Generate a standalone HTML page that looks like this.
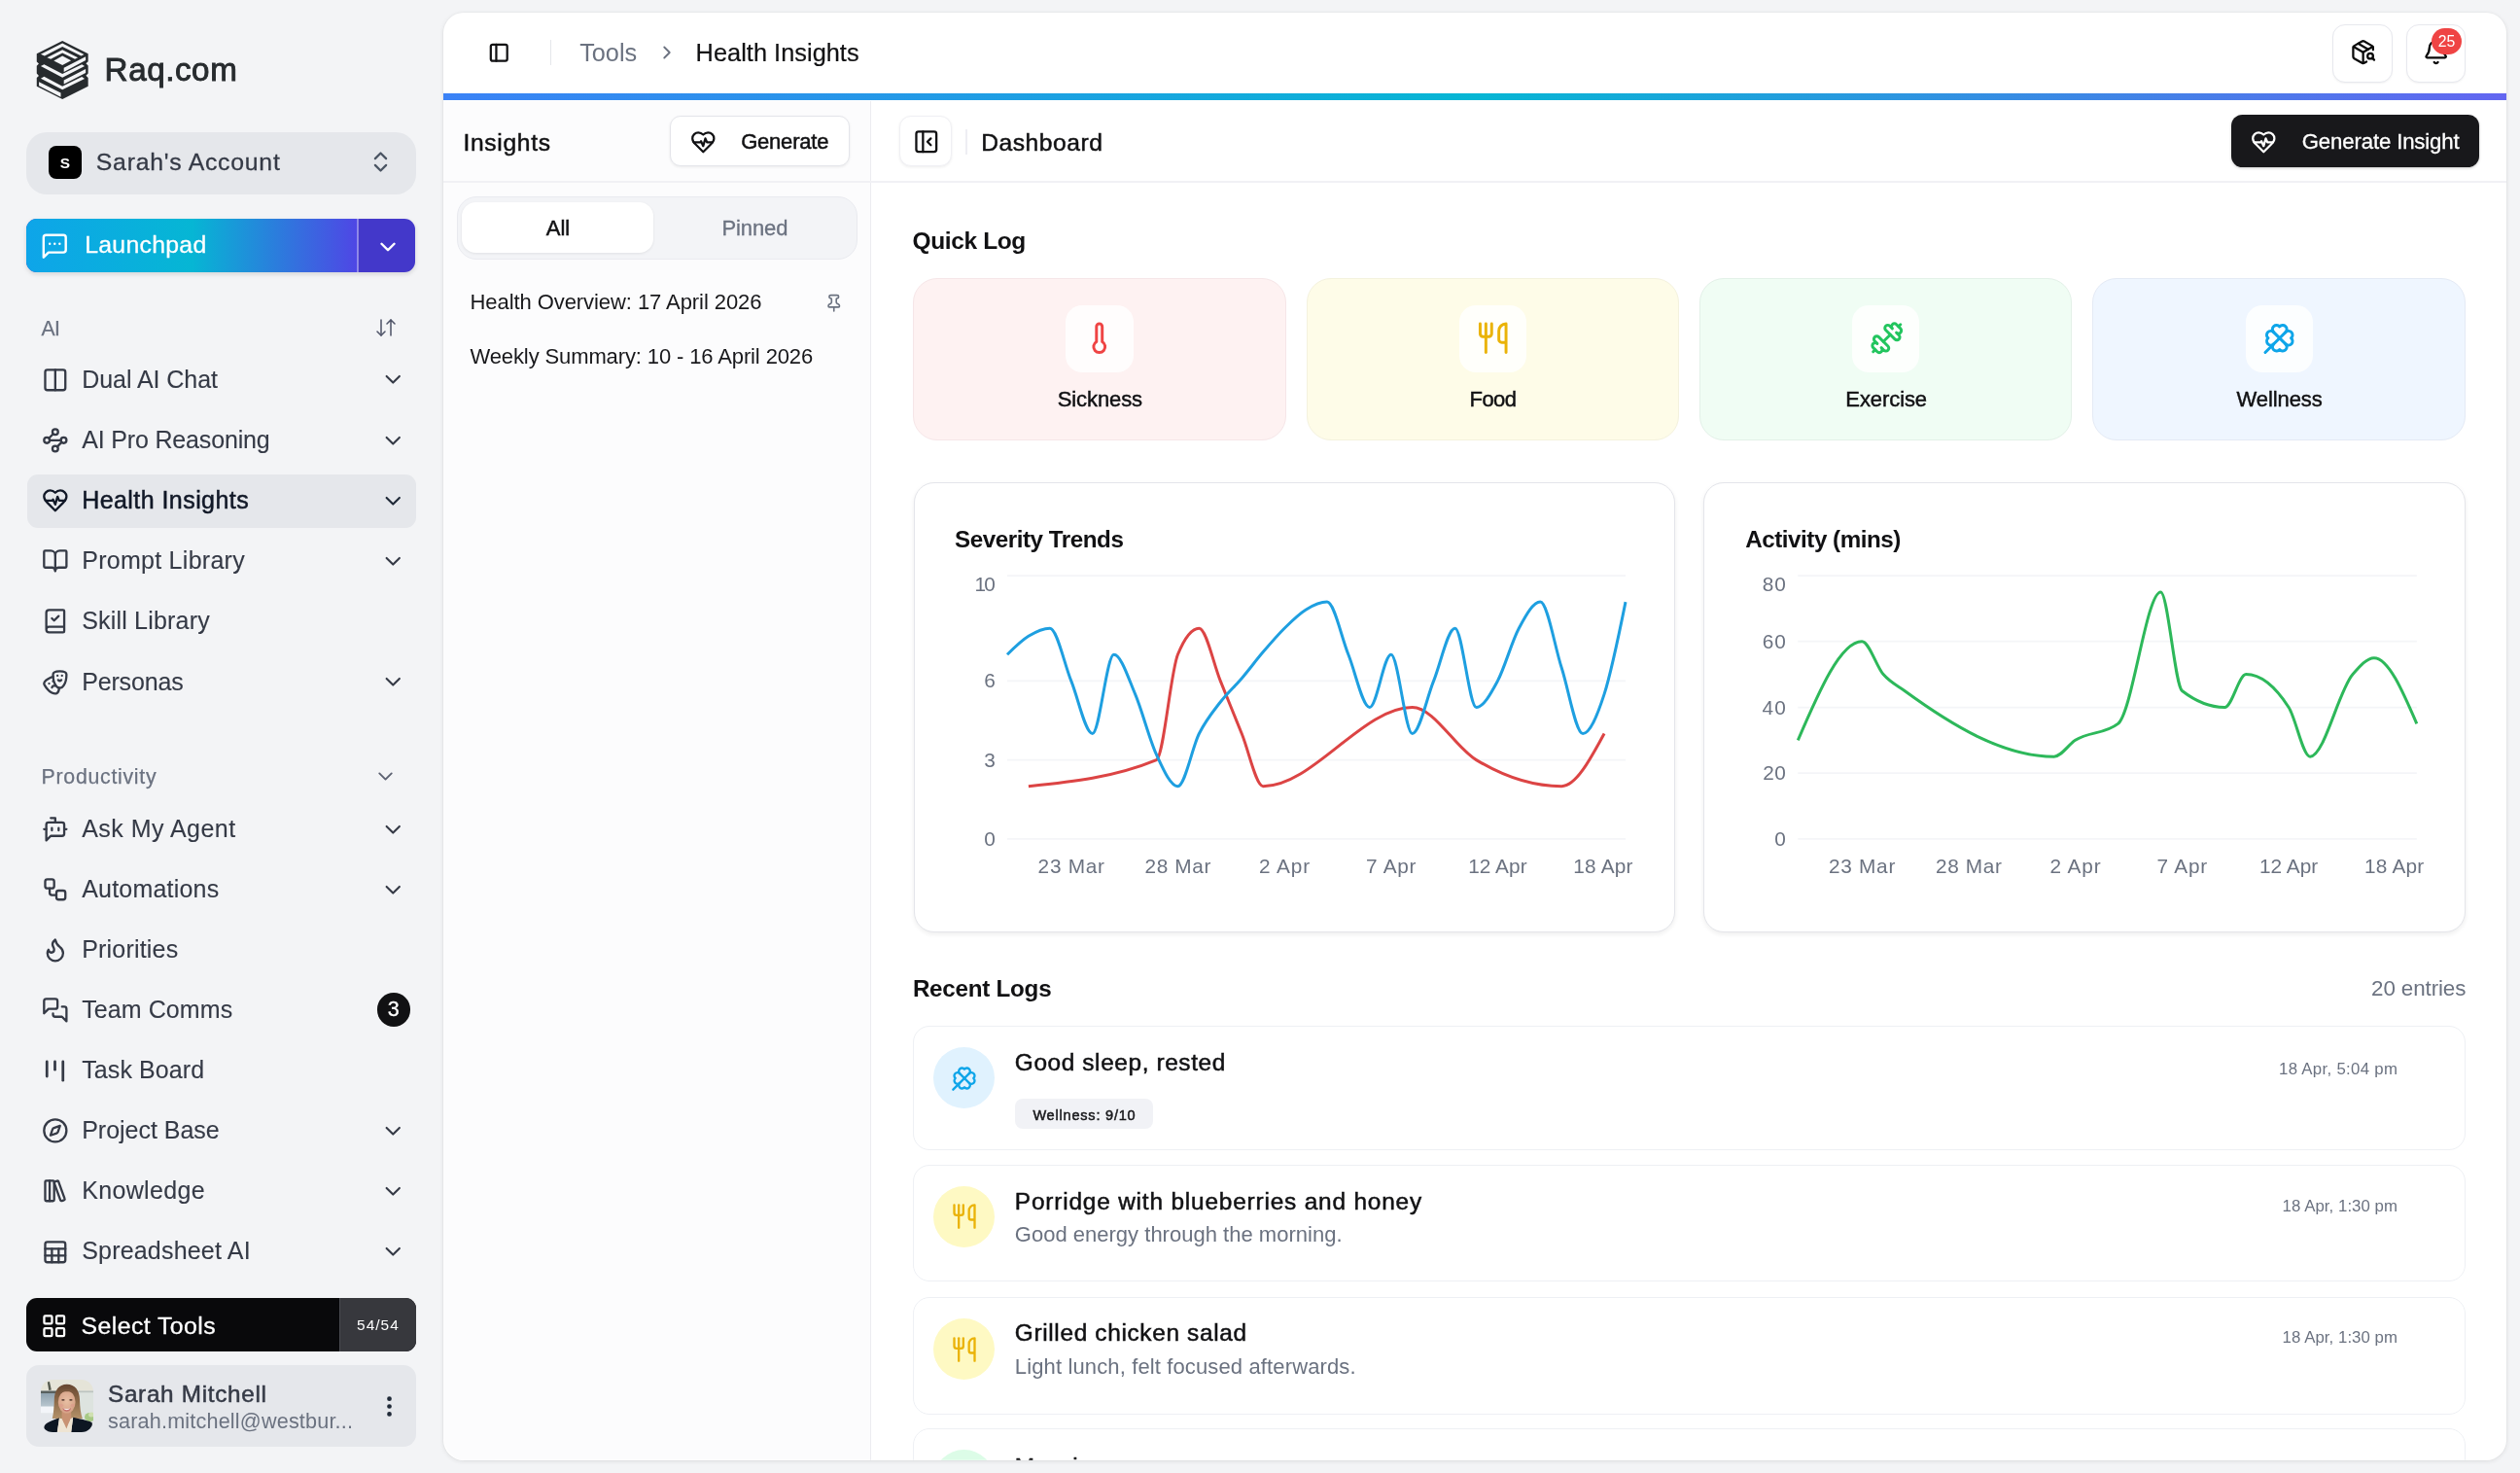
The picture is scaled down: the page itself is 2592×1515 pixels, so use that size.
<!DOCTYPE html>
<html><head><meta charset="utf-8"><title>Health Insights</title>
<style>
html,body{margin:0;padding:0;}
html{width:2592px;height:1515px;overflow:hidden;}
body{width:2592px;height:1515px;overflow:hidden;background:#f3f4f6;font-family:"Liberation Sans", sans-serif;position:relative;}
.a{position:absolute;box-sizing:border-box;}
.t{position:absolute;white-space:pre;font-family:"Liberation Sans", sans-serif;}
svg{overflow:visible;}
</style></head><body>
<div id="root" class="a" style="left:0;top:0;width:2592px;height:1515px;will-change:transform;overflow:hidden;">
<div class="a" style="left:455.80px;top:13.40px;width:2122.50px;height:1488.40px;background:#fff;border-radius:21px;box-shadow:0 0 0 1px rgba(0,0,0,0.025),0 1px 5px rgba(0,0,0,0.09);"></div>
<svg class="a" style="left:32px;top:38px" width="64" height="68" viewBox="0 0 1386 1473">
<polygon fill="#272b2e" points="697,88 1270,372 1270,545 1222,592 1270,640 1270,815 1222,862 1270,910 1270,1100 697,1385 125,1100 125,910 172,865 125,815 125,645 172,595 125,550 125,372"/>
<g fill="#f3f4f6">
<polygon points="215,385 697,142 1180,392 1115,425 697,215 300,425"/>
<polygon points="355,460 697,288 1042,458 975,492 697,355 438,495"/>
<polygon points="697,425 890,525 697,630 505,530"/>
<polygon points="730,690 1215,438 1215,522 730,778"/>
<polygon points="290,612 697,822 1130,612 1192,652 697,903 215,650"/>
<polygon points="730,965 1215,715 1215,800 730,1050"/>
<polygon points="290,885 697,1098 1130,888 1192,930 697,1175 215,925"/>
<polygon points="175,1003 660,1247 660,1335 175,1090"/>
</g></svg>
<span class="t" style="left:107.60px;top:54.50px;font-size:33.2px;line-height:33.2px;color:#272b2e;letter-spacing:0.565px;-webkit-text-stroke:0.9px #272b2e;">Raq.com</span>
<div class="a" style="left:27.00px;top:136.40px;width:401.00px;height:63.20px;background:#e5e7eb;border-radius:21px;"></div>
<div class="a" style="left:49.50px;top:150.00px;width:34.30px;height:34.00px;background:#000;border-radius:8px;"></div>
<span class="t" style="left:61.67px;top:160.06px;font-size:15.4px;line-height:15.4px;color:#fff;font-weight:700;">S</span>
<span class="t" style="left:98.80px;top:155.01px;font-size:24.8px;line-height:24.8px;color:#353a46;letter-spacing:0.756px;-webkit-text-stroke:0.3px #353a46;">Sarah&#39;s Account</span>
<svg class="a" style="left:378.20px;top:153.30px;" width="27.00" height="27.00" viewBox="0 0 24 24" fill="none" stroke="#4b5563" stroke-width="2" stroke-linecap="round" stroke-linejoin="round"><path d="m7 15 5 5 5-5"/><path d="m7 9 5-5 5 5"/></svg>
<div class="a" style="left:27.00px;top:225.00px;width:400.00px;height:55.00px;background:#4338ca;border-radius:11px;box-shadow:0 2px 5px rgba(0,0,0,0.13);"></div>
<div class="a" style="left:27.00px;top:225.00px;width:341.00px;height:55.00px;background:linear-gradient(90deg,#0ea5e9 0%,#06b6d4 50%,#4f46e5 100%);border-radius:11px 0 0 11px;"></div>
<div class="a" style="left:367.20px;top:225.00px;width:1.60px;height:55.00px;background:rgba(255,255,255,0.38);"></div>
<svg class="a" style="left:40.55px;top:238.35px;" width="30.50" height="30.50" viewBox="0 0 24 24" fill="none" stroke="#fff" stroke-width="1.9" stroke-linecap="round" stroke-linejoin="round"><path d="M21 15a2 2 0 0 1-2 2H7l-4 4V5a2 2 0 0 1 2-2h14a2 2 0 0 1 2 2z"/><path d="M8 10h.01"/><path d="M12 10h.01"/><path d="M16 10h.01"/></svg>
<span class="t" style="left:87.20px;top:240.21px;font-size:24.8px;line-height:24.8px;color:#fff;letter-spacing:0.283px;-webkit-text-stroke:0.3px #fff;">Launchpad</span>
<svg class="a" style="left:386.00px;top:240.50px;" width="26.00" height="26.00" viewBox="0 0 24 24" fill="none" stroke="#fff" stroke-width="2.2" stroke-linecap="round" stroke-linejoin="round"><path d="m6 9 6 6 6-6"/></svg>
<span class="t" style="left:42.60px;top:327.35px;font-size:21.2px;line-height:21.2px;color:#6b7280;letter-spacing:-0.831px;-webkit-text-stroke:0.25px #6b7280;">AI</span>
<svg class="a" style="left:384.90px;top:324.70px;" width="24.00" height="24.00" viewBox="0 0 24 24" fill="none" stroke="#50566a" stroke-width="1.55" stroke-linecap="round" stroke-linejoin="round"><path d="m3 16 4 4 4-4"/><path d="M7 20V4"/><path d="m21 8-4-4-4 4"/><path d="M17 4v16"/></svg>
<svg class="a" style="left:42.65px;top:376.65px;" width="27.70" height="27.70" viewBox="0 0 24 24" fill="none" stroke="#353a46" stroke-width="2" stroke-linecap="round" stroke-linejoin="round"><rect width="18" height="18" x="3" y="3" rx="2"/><path d="M12 3v18"/></svg>
<span class="t" style="left:84.20px;top:377.54px;font-size:25px;line-height:25px;color:#353a46;letter-spacing:-0.051px;-webkit-text-stroke:0.1px #353a46;">Dual AI Chat</span>
<svg class="a" style="left:391.15px;top:377.45px;" width="26.50" height="26.50" viewBox="0 0 24 24" fill="none" stroke="#353a46" stroke-width="1.9" stroke-linecap="round" stroke-linejoin="round"><path d="m6 9 6 6 6-6"/></svg>
<svg class="a" style="left:42.65px;top:438.85px;" width="27.70" height="27.70" viewBox="0 0 24 24" fill="none" stroke="#353a46" stroke-width="2" stroke-linecap="round" stroke-linejoin="round"><circle cx="12" cy="4.5" r="2.5"/><path d="m10.2 6.3-3.9 3.9"/><circle cx="4.5" cy="12" r="2.5"/><path d="M7 12h10"/><circle cx="19.5" cy="12" r="2.5"/><path d="m13.8 17.7 3.9-3.9"/><circle cx="12" cy="19.5" r="2.5"/></svg>
<span class="t" style="left:84.20px;top:439.74px;font-size:25px;line-height:25px;color:#353a46;letter-spacing:-0.164px;-webkit-text-stroke:0.1px #353a46;">AI Pro Reasoning</span>
<svg class="a" style="left:391.15px;top:439.65px;" width="26.50" height="26.50" viewBox="0 0 24 24" fill="none" stroke="#353a46" stroke-width="1.9" stroke-linecap="round" stroke-linejoin="round"><path d="m6 9 6 6 6-6"/></svg>
<div class="a" style="left:28.00px;top:487.50px;width:400.00px;height:55.20px;background:#e5e7eb;border-radius:11px;"></div>
<svg class="a" style="left:42.65px;top:501.05px;" width="27.70" height="27.70" viewBox="0 0 24 24" fill="none" stroke="#111827" stroke-width="2" stroke-linecap="round" stroke-linejoin="round"><path d="M19 14c1.49-1.46 3-3.21 3-5.5A5.5 5.5 0 0 0 16.5 3c-1.76 0-3 .5-4.5 2-1.5-1.5-2.74-2-4.5-2A5.5 5.5 0 0 0 2 8.5c0 2.3 1.5 4.05 3 5.5l7 7Z"/><path d="M3.22 12H9.5l.5-1 2 4.5 2-7 1.5 3.5h5.27"/></svg>
<span class="t" style="left:84.20px;top:501.94px;font-size:25px;line-height:25px;color:#111827;letter-spacing:0.438px;-webkit-text-stroke:0.5px #111827;">Health Insights</span>
<svg class="a" style="left:391.15px;top:501.85px;" width="26.50" height="26.50" viewBox="0 0 24 24" fill="none" stroke="#1f2937" stroke-width="1.9" stroke-linecap="round" stroke-linejoin="round"><path d="m6 9 6 6 6-6"/></svg>
<svg class="a" style="left:42.65px;top:563.25px;" width="27.70" height="27.70" viewBox="0 0 24 24" fill="none" stroke="#353a46" stroke-width="2" stroke-linecap="round" stroke-linejoin="round"><path d="M12 7v14"/><path d="M3 18a1 1 0 0 1-1-1V4a1 1 0 0 1 1-1h5a4 4 0 0 1 4 4 4 4 0 0 1 4-4h5a1 1 0 0 1 1 1v13a1 1 0 0 1-1 1h-6a3 3 0 0 0-3 3 3 3 0 0 0-3-3z"/></svg>
<span class="t" style="left:84.20px;top:564.14px;font-size:25px;line-height:25px;color:#353a46;letter-spacing:0.273px;-webkit-text-stroke:0.1px #353a46;">Prompt Library</span>
<svg class="a" style="left:391.15px;top:564.05px;" width="26.50" height="26.50" viewBox="0 0 24 24" fill="none" stroke="#353a46" stroke-width="1.9" stroke-linecap="round" stroke-linejoin="round"><path d="m6 9 6 6 6-6"/></svg>
<svg class="a" style="left:42.65px;top:625.45px;" width="27.70" height="27.70" viewBox="0 0 24 24" fill="none" stroke="#353a46" stroke-width="2" stroke-linecap="round" stroke-linejoin="round"><path d="M4 19.5v-15A2.5 2.5 0 0 1 6.5 2H19a1 1 0 0 1 1 1v18a1 1 0 0 1-1 1H6.5a1 1 0 0 1 0-5H20"/><path d="m9 9.5 2 2 4-4"/></svg>
<span class="t" style="left:84.20px;top:626.34px;font-size:25px;line-height:25px;color:#353a46;letter-spacing:0.191px;-webkit-text-stroke:0.1px #353a46;">Skill Library</span>
<svg class="a" style="left:42.65px;top:687.65px;" width="27.70" height="27.70" viewBox="0 0 24 24" fill="none" stroke="#353a46" stroke-width="2" stroke-linecap="round" stroke-linejoin="round"><path d="M10 11h.01"/><path d="M14 6h.01"/><path d="M18 6h.01"/><path d="M6.5 13.1h.01"/><path d="M22 5c0 9-4 12-6 12s-6-3-6-12c0-2 2-3 6-3s6 1 6 3"/><path d="M17.4 9.9c-.8.8-2 .8-2.8 0"/><path d="M10.1 7.1C9 7.2 7.7 7.7 6 8.6c-3.5 2-4.7 3.9-3.7 5.6 4.5 7.8 9.5 8.4 11.2 7.4.9-.5 1.9-2.1 1.9-4.7"/><path d="M9.1 16.5c.3-1.1 1.4-1.7 2.4-1.4"/></svg>
<span class="t" style="left:84.20px;top:688.54px;font-size:25px;line-height:25px;color:#353a46;letter-spacing:-0.161px;-webkit-text-stroke:0.1px #353a46;">Personas</span>
<svg class="a" style="left:391.15px;top:688.45px;" width="26.50" height="26.50" viewBox="0 0 24 24" fill="none" stroke="#353a46" stroke-width="1.9" stroke-linecap="round" stroke-linejoin="round"><path d="m6 9 6 6 6-6"/></svg>
<span class="t" style="left:42.60px;top:788.97px;font-size:21.3px;line-height:21.3px;color:#6b7280;letter-spacing:0.720px;-webkit-text-stroke:0.25px #6b7280;">Productivity</span>
<svg class="a" style="left:384.30px;top:786.10px;" width="25.00" height="25.00" viewBox="0 0 24 24" fill="none" stroke="#5d6272" stroke-width="1.8" stroke-linecap="round" stroke-linejoin="round"><path d="m6 9 6 6 6-6"/></svg>
<svg class="a" style="left:42.65px;top:838.75px;" width="27.70" height="27.70" viewBox="0 0 24 24" fill="none" stroke="#353a46" stroke-width="2" stroke-linecap="round" stroke-linejoin="round"><path d="M12 6V2H8"/><path d="m8 18-4 4V8a2 2 0 0 1 2-2h12a2 2 0 0 1 2 2v8a2 2 0 0 1-2 2Z"/><path d="M2 12h2"/><path d="M9 11v2"/><path d="M15 11v2"/><path d="M20 12h2"/></svg>
<span class="t" style="left:84.20px;top:839.64px;font-size:25px;line-height:25px;color:#353a46;letter-spacing:0.467px;-webkit-text-stroke:0.1px #353a46;">Ask My Agent</span>
<svg class="a" style="left:391.15px;top:839.55px;" width="26.50" height="26.50" viewBox="0 0 24 24" fill="none" stroke="#353a46" stroke-width="1.9" stroke-linecap="round" stroke-linejoin="round"><path d="m6 9 6 6 6-6"/></svg>
<svg class="a" style="left:42.65px;top:900.85px;" width="27.70" height="27.70" viewBox="0 0 24 24" fill="none" stroke="#353a46" stroke-width="2" stroke-linecap="round" stroke-linejoin="round"><rect width="8" height="8" x="3" y="3" rx="2"/><path d="M7 11v4a2 2 0 0 0 2 2h4"/><rect width="8" height="8" x="13" y="13" rx="2"/></svg>
<span class="t" style="left:84.20px;top:901.74px;font-size:25px;line-height:25px;color:#353a46;letter-spacing:0.203px;-webkit-text-stroke:0.1px #353a46;">Automations</span>
<svg class="a" style="left:391.15px;top:901.65px;" width="26.50" height="26.50" viewBox="0 0 24 24" fill="none" stroke="#353a46" stroke-width="1.9" stroke-linecap="round" stroke-linejoin="round"><path d="m6 9 6 6 6-6"/></svg>
<svg class="a" style="left:42.65px;top:962.95px;" width="27.70" height="27.70" viewBox="0 0 24 24" fill="none" stroke="#353a46" stroke-width="2" stroke-linecap="round" stroke-linejoin="round"><path d="M8.5 14.5A2.5 2.5 0 0 0 11 12c0-1.38-.5-2-1-3-1.072-2.143-.224-4.054 2-6 .5 2.5 2 4.9 4 6.5 2 1.6 3 3.5 3 5.5a7 7 0 1 1-14 0c0-1.153.433-2.294 1-3a2.5 2.5 0 0 0 2.5 2.5z"/></svg>
<span class="t" style="left:84.20px;top:963.84px;font-size:25px;line-height:25px;color:#353a46;letter-spacing:0.194px;-webkit-text-stroke:0.1px #353a46;">Priorities</span>
<svg class="a" style="left:42.65px;top:1025.05px;" width="27.70" height="27.70" viewBox="0 0 24 24" fill="none" stroke="#353a46" stroke-width="2" stroke-linecap="round" stroke-linejoin="round"><path d="M14 9a2 2 0 0 1-2 2H6l-4 4V4a2 2 0 0 1 2-2h8a2 2 0 0 1 2 2z"/><path d="M18 9h2a2 2 0 0 1 2 2v11l-4-4h-6a2 2 0 0 1-2-2v-1"/></svg>
<span class="t" style="left:84.20px;top:1025.94px;font-size:25px;line-height:25px;color:#353a46;letter-spacing:0.090px;-webkit-text-stroke:0.1px #353a46;">Team Comms</span>
<svg class="a" style="left:40.00px;top:1084.50px;" width="33.00" height="33.00" viewBox="0 0 24 24" fill="none" stroke="#353a46" stroke-width="2" stroke-linecap="round" stroke-linejoin="round"><path d="M6 5v11"/><path d="M12 5v6"/><path d="M18 5v14"/></svg>
<span class="t" style="left:84.20px;top:1088.04px;font-size:25px;line-height:25px;color:#353a46;letter-spacing:0.104px;-webkit-text-stroke:0.1px #353a46;">Task Board</span>
<svg class="a" style="left:42.65px;top:1149.35px;" width="27.70" height="27.70" viewBox="0 0 24 24" fill="none" stroke="#353a46" stroke-width="2" stroke-linecap="round" stroke-linejoin="round"><path d="m16.24 7.76-1.804 5.411a2 2 0 0 1-1.265 1.265L7.76 16.24l1.804-5.411a2 2 0 0 1 1.265-1.265z"/><circle cx="12" cy="12" r="10"/></svg>
<span class="t" style="left:84.20px;top:1150.24px;font-size:25px;line-height:25px;color:#353a46;letter-spacing:-0.023px;-webkit-text-stroke:0.1px #353a46;">Project Base</span>
<svg class="a" style="left:391.15px;top:1150.15px;" width="26.50" height="26.50" viewBox="0 0 24 24" fill="none" stroke="#353a46" stroke-width="1.9" stroke-linecap="round" stroke-linejoin="round"><path d="m6 9 6 6 6-6"/></svg>
<svg class="a" style="left:42.65px;top:1211.45px;" width="27.70" height="27.70" viewBox="0 0 24 24" fill="none" stroke="#353a46" stroke-width="2" stroke-linecap="round" stroke-linejoin="round"><rect width="8" height="18" x="3" y="3" rx="1"/><path d="M7 3v18"/><path d="M20.4 18.9c.2.5-.1 1.1-.6 1.3l-1.9.7c-.5.2-1.1-.1-1.3-.6L11.1 5.1c-.2-.5.1-1.1.6-1.3l1.9-.7c.5-.2 1.1.1 1.3.6Z"/></svg>
<span class="t" style="left:84.20px;top:1212.34px;font-size:25px;line-height:25px;color:#353a46;letter-spacing:0.348px;-webkit-text-stroke:0.1px #353a46;">Knowledge</span>
<svg class="a" style="left:391.15px;top:1212.25px;" width="26.50" height="26.50" viewBox="0 0 24 24" fill="none" stroke="#353a46" stroke-width="1.9" stroke-linecap="round" stroke-linejoin="round"><path d="m6 9 6 6 6-6"/></svg>
<svg class="a" style="left:42.65px;top:1273.55px;" width="27.70" height="27.70" viewBox="0 0 24 24" fill="none" stroke="#353a46" stroke-width="2" stroke-linecap="round" stroke-linejoin="round"><rect width="18" height="18" x="3" y="3" rx="2" ry="2"/><line x1="3" x2="21" y1="9" y2="9"/><line x1="3" x2="21" y1="15" y2="15"/><line x1="9" x2="9" y1="9" y2="21"/><line x1="15" x2="15" y1="9" y2="21"/></svg>
<span class="t" style="left:84.20px;top:1274.44px;font-size:25px;line-height:25px;color:#353a46;letter-spacing:0.195px;-webkit-text-stroke:0.1px #353a46;">Spreadsheet AI</span>
<svg class="a" style="left:391.15px;top:1274.35px;" width="26.50" height="26.50" viewBox="0 0 24 24" fill="none" stroke="#353a46" stroke-width="1.9" stroke-linecap="round" stroke-linejoin="round"><path d="m6 9 6 6 6-6"/></svg>
<div class="a" style="left:387.50px;top:1021.30px;width:34.60px;height:34.60px;background:#111113;border-radius:18px;"></div>
<span class="t" style="left:398.82px;top:1028.20px;font-size:21.5px;line-height:21.5px;color:#fff;-webkit-text-stroke:0.3px #fff;">3</span>
<div class="a" style="left:27.00px;top:1335.20px;width:400.60px;height:54.80px;background:#09090b;border-radius:11px;"></div>
<div class="a" style="left:349.00px;top:1335.20px;width:78.60px;height:54.80px;background:#37383d;border-radius:0 11px 11px 0;border-left:1.5px solid #4a4b51;"></div>
<svg class="a" style="left:42.05px;top:1350.15px;" width="27.50" height="27.50" viewBox="0 0 24 24" fill="none" stroke="#fff" stroke-width="2" stroke-linecap="round" stroke-linejoin="round"><rect width="7" height="7" x="3" y="3" rx="1"/><rect width="7" height="7" x="14" y="3" rx="1"/><rect width="7" height="7" x="14" y="14" rx="1"/><rect width="7" height="7" x="3" y="14" rx="1"/></svg>
<span class="t" style="left:83.60px;top:1351.81px;font-size:24.8px;line-height:24.8px;color:#fff;letter-spacing:0.432px;-webkit-text-stroke:0.3px #fff;">Select Tools</span>
<span class="t" style="left:367.00px;top:1355.46px;font-size:15.4px;line-height:15.4px;color:#fff;letter-spacing:1.071px;">54/54</span>
<div class="a" style="left:27.00px;top:1404.00px;width:400.60px;height:83.50px;background:#e5e7eb;border-radius:13px;"></div>
<svg class="a" style="left:42px;top:1419px" width="54" height="54" viewBox="0 0 54 54">
<defs><clipPath id="av"><rect width="54" height="54" rx="12.2"/></clipPath>
<linearGradient id="hair" x1="0" y1="0" x2="0" y2="1"><stop offset="0" stop-color="#65452f"/><stop offset="0.45" stop-color="#8a6747"/><stop offset="1" stop-color="#b39169"/></linearGradient>
<linearGradient id="win" x1="0" y1="0" x2="0" y2="1"><stop offset="0" stop-color="#8fa2ae"/><stop offset="1" stop-color="#b9c7d0"/></linearGradient>
<radialGradient id="face" cx="0.5" cy="0.45" r="0.6"><stop offset="0" stop-color="#e8bfa3"/><stop offset="1" stop-color="#d49f84"/></radialGradient>
<filter id="bl" x="-20%" y="-20%" width="140%" height="140%"><feGaussianBlur stdDeviation="0.75"/></filter></defs>
<g clip-path="url(#av)"><g filter="url(#bl)">
<rect x="-4" y="-4" width="62" height="62" fill="#e2e6e2"/>
<rect x="-4" y="-4" width="62" height="15.500" fill="#e5e4d8"/>
<rect x="37" y="11.500" width="21" height="2" fill="#bcc4c0"/>
<rect x="37" y="13.500" width="21" height="30" fill="#dde3df"/>
<rect x="-4" y="11.500" width="22" height="2.600" fill="#59615e"/>
<path d="M6.800 2.500l2.200-.4 1.800 8.500-2.600.3z" fill="#555a50"/>
<rect x="-4" y="14" width="19" height="13.800" fill="url(#win)"/>
<rect x="-4" y="27.600" width="17" height="7" fill="#f3f5f9"/>
<rect x="-4" y="34.500" width="20" height="24" fill="#e4e7eb"/>
<ellipse cx="50.500" cy="38.500" rx="5.500" ry="4.500" fill="#a7c985"/>
<ellipse cx="52" cy="36" rx="3" ry="2.500" fill="#cfe0b0"/>
<path d="M26.800 4.700c-8.300 0-12.800 6.300-13 15.800-.1 7.500-.600 13.500-2 19.500h31c-1.800-5.500-2.600-11.500-2.800-19.500-.2-9.500-4.900-15.800-13.200-15.800z" fill="url(#hair)"/>
<path d="M21.600 33h9.600v11.500h-9.600z" fill="#c89273"/>
<ellipse cx="26.700" cy="23" rx="8.900" ry="11.600" fill="url(#face)"/>
<path d="M17.600 18.500c.5-6.500 4.500-8.500 9.500-8.500s8.500 2.500 8.800 8.500c-1.500-4.500-4-6.200-8.800-6.200s-8 1.700-9.500 6.200z" fill="#7a583d"/>
<ellipse cx="22.900" cy="20.900" rx="1.700" ry=".8" fill="#5a4034"/>
<ellipse cx="30.900" cy="20.900" rx="1.700" ry=".8" fill="#5a4034"/>
<ellipse cx="21" cy="26.500" rx="2.200" ry="1.800" fill="#dc9a8a" opacity=".6"/>
<ellipse cx="32.800" cy="26.500" rx="2.200" ry="1.800" fill="#dc9a8a" opacity=".6"/>
<path d="M22.300 29.200c2.500 1 6.300 1 8.800 0-.8 2.600-2.600 3.500-4.400 3.500s-3.600-.9-4.400-3.500z" fill="#c4716f"/>
<path d="M23.200 29.600c2.200.6 4.800.6 7 0-.8 1.300-2.200 1.700-3.500 1.700s-2.700-.4-3.500-1.700z" fill="#f7ece8"/>
<path d="M3.600 47.800c1.500-3.500 8-6 15.400-8.300l-2.400 16h-9c-2.500-1.500-4.800-4.500-4-7.700z" fill="#0c1220"/>
<path d="M33.200 38.700c8 2 17 3.500 19.500 5.600.6 3.500-.5 7.500-2 11.200h-19.700z" fill="#0c1220"/>
<path d="M19 39.600l3.200 1.200 4.200 9.800 4-10.300 2.800-1.600-2.200 16.800h-14.400z" fill="#eee4d3"/>
<path d="M21.900 40.600l4.500 10 3.900-10.300c-2.600 1.600-5.800 1.700-8.400.3z" fill="#c89273"/>
</g></g></svg>
<span class="t" style="left:111.00px;top:1421.53px;font-size:24.3px;line-height:24.3px;color:#353a46;letter-spacing:0.696px;-webkit-text-stroke:0.5px #353a46;">Sarah Mitchell</span>
<span class="t" style="left:111.00px;top:1451.02px;font-size:21.6px;line-height:21.6px;color:#6b7280;letter-spacing:0.185px;">sarah.mitchell@westbur...</span>
<svg class="a" style="left:387.20px;top:1433.00px;" width="27.00" height="27.00" viewBox="0 0 24 24" fill="none" stroke="#1f2937" stroke-width="2.2" stroke-linecap="round" stroke-linejoin="round"><circle cx="12" cy="12" r="1"/><circle cx="12" cy="5" r="1"/><circle cx="12" cy="19" r="1"/></svg>
<div class="a" style="left:0;top:0;width:2592px;height:1515px;clip-path:inset(13.4px 13.7px 13.2px 455.8px round 21px)">
<svg class="a" style="left:502.05px;top:43.45px;" width="22.50" height="22.50" viewBox="0 0 24 24" fill="none" stroke="#111113" stroke-width="2.4" stroke-linecap="round" stroke-linejoin="round"><rect width="18" height="18" x="3" y="3" rx="2"/><path d="M9 3v18"/></svg>
<div class="a" style="left:565.50px;top:40.60px;width:1.60px;height:26.70px;background:#e5e7eb;"></div>
<span class="t" style="left:596.20px;top:41.88px;font-size:25.3px;line-height:25.3px;color:#6b7280;letter-spacing:-0.016px;">Tools</span>
<svg class="a" style="left:675.00px;top:43.30px;" width="22.00" height="22.00" viewBox="0 0 24 24" fill="none" stroke="#6b7280" stroke-width="2" stroke-linecap="round" stroke-linejoin="round"><path d="m9 18 6-6-6-6"/></svg>
<span class="t" style="left:715.60px;top:41.88px;font-size:25.3px;line-height:25.3px;color:#111113;letter-spacing:0.047px;-webkit-text-stroke:0.2px #111113;">Health Insights</span>
<div class="a" style="left:2399.20px;top:24.70px;width:61.50px;height:60.00px;background:#fff;border-radius:13px;border:1.5px solid #e7e8ee;box-shadow:0 1px 2px rgba(0,0,0,0.05);"></div>
<div class="a" style="left:2475.40px;top:24.70px;width:60.50px;height:60.00px;background:#fff;border-radius:13px;border:1.5px solid #e7e8ee;box-shadow:0 1px 2px rgba(0,0,0,0.05);"></div>
<svg class="a" style="left:2416.65px;top:40.35px;" width="27.30" height="27.30" viewBox="0 0 24 24" fill="none" stroke="#0a0a0a" stroke-width="2" stroke-linecap="round" stroke-linejoin="round"><path d="M21 10V8a2 2 0 0 0-1-1.73l-7-4a2 2 0 0 0-2 0l-7 4A2 2 0 0 0 3 8v8a2 2 0 0 0 1 1.73l7 4a2 2 0 0 0 2 0l2-1.14"/><path d="m7.5 4.27 9 5.15"/><polyline points="3.29 7 12 12 20.71 7"/><line x1="12" x2="12" y1="22" y2="12"/><circle cx="18.5" cy="15.5" r="2.5"/><path d="M20.27 17.27 22 19"/></svg>
<svg class="a" style="left:2491.75px;top:40.35px;" width="27.30" height="27.30" viewBox="0 0 24 24" fill="none" stroke="#0a0a0a" stroke-width="2" stroke-linecap="round" stroke-linejoin="round"><path d="M10.268 21a2 2 0 0 0 3.464 0"/><path d="M3.262 15.326A1 1 0 0 0 4 17h16a1 1 0 0 0 .74-1.673C19.41 13.956 18 12.499 18 8A6 6 0 0 0 6 8c0 4.499-1.411 5.956-2.738 7.326"/></svg>
<div class="a" style="left:2501.00px;top:28.60px;width:31.00px;height:27.00px;background:#ef4444;border-radius:14px;"></div>
<span class="t" style="left:2507.80px;top:34.63px;font-size:15.8px;line-height:15.8px;color:#fff;letter-spacing:0.022px;">25</span>
<div class="a" style="left:456.00px;top:95.70px;width:2122.30px;height:7.80px;background:linear-gradient(90deg,#3b82f6 0%,#06b6d4 50%,#6366f1 100%);"></div>
<div class="a" style="left:456.00px;top:103.50px;width:440.20px;height:1399.00px;background:#fcfcfd;border-right:1.6px solid #ececf0;border-bottom-left-radius:26px;"></div>
<div class="a" style="left:456.00px;top:186.40px;width:2122.30px;height:1.60px;background:#f1f1f5;"></div>
<span class="t" style="left:476.50px;top:134.58px;font-size:24.6px;line-height:24.6px;color:#111113;letter-spacing:0.676px;-webkit-text-stroke:0.5px #111113;">Insights</span>
<div class="a" style="left:689.00px;top:119.20px;width:184.60px;height:52.20px;background:#fff;border-radius:11px;border:1.5px solid #e4e5ea;box-shadow:0 1px 3px rgba(0,0,0,0.07);"></div>
<svg class="a" style="left:710.10px;top:133.00px;" width="26.60" height="26.60" viewBox="0 0 24 24" fill="none" stroke="#111113" stroke-width="2" stroke-linecap="round" stroke-linejoin="round"><path d="M19 14c1.49-1.46 3-3.21 3-5.5A5.5 5.5 0 0 0 16.5 3c-1.76 0-3 .5-4.5 2-1.5-1.5-2.74-2-4.5-2A5.5 5.5 0 0 0 2 8.5c0 2.3 1.5 4.05 3 5.5l7 7Z"/><path d="M3.22 12H9.5l.5-1 2 4.5 2-7 1.5 3.5h5.27"/></svg>
<span class="t" style="left:762.20px;top:134.98px;font-size:22px;line-height:22px;color:#111113;letter-spacing:-0.219px;-webkit-text-stroke:0.5px #111113;">Generate</span>
<div class="a" style="left:470.20px;top:201.50px;width:411.80px;height:65.00px;background:#f3f4f7;border-radius:20px;border:1.5px solid #e9eaef;"></div>
<div class="a" style="left:474.60px;top:208.00px;width:197.80px;height:52.20px;background:#fff;border-radius:14.5px;box-shadow:0 1px 3px rgba(0,0,0,0.08);"></div>
<span class="t" style="left:561.75px;top:223.78px;font-size:22px;line-height:22px;color:#111113;letter-spacing:0.023px;-webkit-text-stroke:0.5px #111113;">All</span>
<span class="t" style="left:742.50px;top:223.78px;font-size:22px;line-height:22px;color:#6b7280;letter-spacing:-0.103px;-webkit-text-stroke:0.3px #6b7280;">Pinned</span>
<span class="t" style="left:483.50px;top:299.98px;font-size:22px;line-height:22px;color:#18181b;letter-spacing:-0.071px;">Health Overview: 17 April 2026</span>
<svg class="a" style="left:847.95px;top:302.05px;" width="19.50" height="19.50" viewBox="0 0 24 24" fill="none" stroke="#6b7280" stroke-width="2" stroke-linecap="round" stroke-linejoin="round"><path d="M12 17v5"/><path d="M9 10.76a2 2 0 0 1-1.11 1.79l-1.78.9A2 2 0 0 0 5 15.24V16a1 1 0 0 0 1 1h12a1 1 0 0 0 1-1v-.76a2 2 0 0 0-1.11-1.79l-1.78-.9A2 2 0 0 1 15 10.76V7a1 1 0 0 1 1-1 2 2 0 0 0 0-4H8a2 2 0 0 0 0 4 1 1 0 0 1 1 1z"/></svg>
<span class="t" style="left:483.50px;top:356.18px;font-size:22px;line-height:22px;color:#18181b;letter-spacing:-0.119px;">Weekly Summary: 10 - 16 April 2026</span>
<div class="a" style="left:924.80px;top:119.40px;width:53.90px;height:52.00px;background:#fff;border-radius:12px;border:1.5px solid #f0f0f4;box-shadow:0 1px 3px rgba(0,0,0,0.07);"></div>
<svg class="a" style="left:939.20px;top:132.20px;" width="27.60" height="27.60" viewBox="0 0 24 24" fill="none" stroke="#111113" stroke-width="2" stroke-linecap="round" stroke-linejoin="round"><rect width="18" height="18" x="3" y="3" rx="2"/><path d="M9 3v18"/><path d="m16 15-3-3 3-3"/></svg>
<div class="a" style="left:993.20px;top:132.70px;width:1.60px;height:26.00px;background:#eeeef3;"></div>
<span class="t" style="left:1009.20px;top:134.58px;font-size:24.6px;line-height:24.6px;color:#111113;letter-spacing:0.559px;-webkit-text-stroke:0.5px #111113;">Dashboard</span>
<div class="a" style="left:2294.90px;top:118.30px;width:255.10px;height:53.80px;background:#18181b;border-radius:11.5px;box-shadow:0 1px 3px rgba(0,0,0,0.2);"></div>
<svg class="a" style="left:2315.40px;top:133.00px;" width="26.60" height="26.60" viewBox="0 0 24 24" fill="none" stroke="#fff" stroke-width="2" stroke-linecap="round" stroke-linejoin="round"><path d="M19 14c1.49-1.46 3-3.21 3-5.5A5.5 5.5 0 0 0 16.5 3c-1.76 0-3 .5-4.5 2-1.5-1.5-2.74-2-4.5-2A5.5 5.5 0 0 0 2 8.5c0 2.3 1.5 4.05 3 5.5l7 7Z"/><path d="M3.22 12H9.5l.5-1 2 4.5 2-7 1.5 3.5h5.27"/></svg>
<span class="t" style="left:2367.70px;top:134.51px;font-size:22.2px;line-height:22.2px;color:#fff;letter-spacing:-0.136px;-webkit-text-stroke:0.3px #fff;">Generate Insight</span>
<span class="t" style="left:938.60px;top:235.56px;font-size:24.5px;line-height:24.5px;color:#111113;font-weight:700;letter-spacing:-0.387px;">Quick Log</span>
<div class="a" style="left:939.20px;top:286.00px;width:383.40px;height:166.60px;background:#fef2f2;border-radius:25px;border:1.6px solid #f6e6e8;"></div>
<div class="a" style="left:1096.40px;top:313.70px;width:69.20px;height:69.00px;background:rgba(255,255,255,0.82);border-radius:17px;"></div>
<svg class="a" style="left:1113.25px;top:330.25px;" width="35.50" height="35.50" viewBox="0 0 24 24" fill="none" stroke="#ef4444" stroke-width="2" stroke-linecap="round" stroke-linejoin="round"><path d="M14 4v10.54a4 4 0 1 1-4 0V4a2 2 0 0 1 4 0Z"/></svg>
<span class="t" style="left:1087.75px;top:399.78px;font-size:22px;line-height:22px;color:#111113;letter-spacing:-0.107px;-webkit-text-stroke:0.45px #111113;">Sickness</span>
<div class="a" style="left:1343.60px;top:286.00px;width:383.40px;height:166.60px;background:#fefce8;border-radius:25px;border:1.6px solid #f4f2de;"></div>
<div class="a" style="left:1500.80px;top:313.70px;width:69.20px;height:69.00px;background:rgba(255,255,255,0.82);border-radius:17px;"></div>
<svg class="a" style="left:1517.65px;top:330.25px;" width="35.50" height="35.50" viewBox="0 0 24 24" fill="none" stroke="#eab308" stroke-width="2" stroke-linecap="round" stroke-linejoin="round"><path d="M3 2v7c0 1.1.9 2 2 2h4a2 2 0 0 0 2-2V2"/><path d="M7 2v20"/><path d="M21 15V2a5 5 0 0 0-5 5v6c0 1.1.9 2 2 2h3Zm0 0v7"/></svg>
<span class="t" style="left:1511.55px;top:399.78px;font-size:22px;line-height:22px;color:#111113;letter-spacing:-0.552px;-webkit-text-stroke:0.45px #111113;">Food</span>
<div class="a" style="left:1748.00px;top:286.00px;width:383.40px;height:166.60px;background:#f0fdf4;border-radius:25px;border:1.6px solid #e3f1e8;"></div>
<div class="a" style="left:1905.20px;top:313.70px;width:69.20px;height:69.00px;background:rgba(255,255,255,0.82);border-radius:17px;"></div>
<svg class="a" style="left:1923.05px;top:330.25px;" width="35.50" height="35.50" viewBox="0 0 24 24" fill="none" stroke="#22c55e" stroke-width="2" stroke-linecap="round" stroke-linejoin="round"><path d="M17.596 12.768a2 2 0 1 0 2.829-2.829l-1.768-1.767a2 2 0 0 0 2.828-2.829l-2.828-2.828a2 2 0 0 0-2.829 2.828l-1.767-1.768a2 2 0 1 0-2.829 2.829z"/><path d="m2.5 21.5 1.4-1.4"/><path d="m20.1 3.9 1.4-1.4"/><path d="M5.343 21.485a2 2 0 1 0 2.829-2.828l1.767 1.768a2 2 0 1 0 2.829-2.829l-6.364-6.364a2 2 0 1 0-2.829 2.829l1.768 1.767a2 2 0 0 0-2.828 2.829z"/><path d="m9.6 14.4 4.8-4.8"/></svg>
<span class="t" style="left:1898.30px;top:399.78px;font-size:22px;line-height:22px;color:#111113;letter-spacing:-0.080px;-webkit-text-stroke:0.45px #111113;">Exercise</span>
<div class="a" style="left:2152.40px;top:286.00px;width:383.40px;height:166.60px;background:#eff6ff;border-radius:25px;border:1.6px solid #e4eaf5;"></div>
<div class="a" style="left:2309.60px;top:313.70px;width:69.20px;height:69.00px;background:rgba(255,255,255,0.82);border-radius:17px;"></div>
<svg class="a" style="left:2327.45px;top:330.25px;" width="35.50" height="35.50" viewBox="0 0 24 24" fill="none" stroke="#0ea5e9" stroke-width="2" stroke-linecap="round" stroke-linejoin="round"><path d="M16.17 7.83 2 22"/><path d="M4.02 12a2.827 2.827 0 1 1 3.81-4.17A2.827 2.827 0 1 1 12 4.02a2.827 2.827 0 1 1 4.17 3.81A2.827 2.827 0 1 1 19.98 12a2.827 2.827 0 1 1-3.81 4.17A2.827 2.827 0 1 1 12 19.98a2.827 2.827 0 1 1-4.17-3.81A1 1 0 1 1 4 12"/><path d="m7.83 7.83 8.34 8.34"/></svg>
<span class="t" style="left:2300.45px;top:399.78px;font-size:22px;line-height:22px;color:#111113;letter-spacing:-0.080px;-webkit-text-stroke:0.45px #111113;">Wellness</span>
<div class="a" style="left:939.70px;top:496.00px;width:783.80px;height:462.60px;background:#fff;border-radius:21px;border:1.7px solid #e4e5ea;box-shadow:0 2px 5px rgba(0,0,0,0.07);"></div>
<span class="t" style="left:982.10px;top:542.71px;font-size:24.2px;line-height:24.2px;color:#111113;font-weight:700;letter-spacing:-0.454px;">Severity Trends</span>
<svg class="a" style="left:0;top:0" width="2592" height="1515" viewBox="0 0 2592 1515" fill="none"><line x1="1036" x2="1672" y1="862.9" y2="862.9" stroke="#f4f5f8" stroke-width="1.75"/><line x1="1036" x2="1672" y1="781.6" y2="781.6" stroke="#f4f5f8" stroke-width="1.75"/><line x1="1036" x2="1672" y1="700.4" y2="700.4" stroke="#f4f5f8" stroke-width="1.75"/><line x1="1036" x2="1672" y1="592.0" y2="592.0" stroke="#f4f5f8" stroke-width="1.75"/><path d="M1057.9,808.7C1101.8,804.2 1145.7,799.7 1189.5,781.6C1196.8,778.6 1204.1,691.3 1211.4,673.3C1218.8,655.2 1226.1,646.2 1233.4,646.2C1240.7,646.2 1248.0,682.3 1255.3,700.4C1262.6,718.4 1269.9,736.5 1277.2,754.5C1284.6,772.6 1291.9,808.7 1299.2,808.7C1350.3,808.7 1401.5,727.5 1452.7,727.5C1474.6,727.5 1496.6,768.4 1518.5,781.6C1547.7,799.3 1577.0,808.7 1606.2,808.7C1620.8,808.7 1635.4,781.6 1650.1,754.5" stroke="#dc4444" stroke-width="3.0" stroke-linecap="butt" stroke-linejoin="round"/><path d="M1036.0,673.3C1043.3,666.0 1050.6,658.8 1057.9,654.3C1065.2,649.8 1072.6,646.2 1079.9,646.2C1087.2,646.2 1094.5,682.3 1101.8,700.4C1109.1,718.4 1116.4,754.5 1123.7,754.5C1131.0,754.5 1138.3,673.3 1145.7,673.3C1153.0,673.3 1160.3,696.7 1167.6,713.9C1174.9,731.1 1182.2,760.4 1189.5,776.2C1196.8,792.0 1204.1,808.7 1211.4,808.7C1218.8,808.7 1226.1,769.0 1233.4,754.5C1240.7,740.1 1248.0,731.5 1255.3,722.0C1262.6,712.6 1269.9,706.2 1277.2,697.7C1284.6,689.1 1291.9,679.1 1299.2,670.6C1306.5,662.0 1313.8,653.4 1321.1,646.2C1328.4,639.0 1335.7,631.7 1343.0,627.2C1350.3,622.7 1357.7,619.1 1365.0,619.1C1372.3,619.1 1379.6,655.2 1386.9,673.3C1394.2,691.3 1401.5,727.5 1408.8,727.5C1416.1,727.5 1423.4,673.3 1430.8,673.3C1438.1,673.3 1445.4,754.5 1452.7,754.5C1460.0,754.5 1467.3,718.4 1474.6,700.4C1481.9,682.3 1489.2,646.2 1496.6,646.2C1503.9,646.2 1511.2,727.5 1518.5,727.5C1525.8,727.5 1533.1,713.9 1540.4,700.4C1547.7,686.8 1555.0,659.7 1562.3,646.2C1569.7,632.6 1577.0,619.1 1584.3,619.1C1591.6,619.1 1598.9,664.2 1606.2,686.8C1613.5,709.4 1620.8,754.5 1628.1,754.5C1635.4,754.5 1642.8,736.5 1650.1,713.9C1657.4,691.3 1664.7,655.2 1672.0,619.1" stroke="#1e9fe0" stroke-width="3.0" stroke-linecap="butt" stroke-linejoin="round"/></svg>
<span class="t" style="left:1012.22px;top:852.99px;font-size:20.8px;line-height:20.8px;color:#6b7280;">0</span>
<span class="t" style="left:1012.22px;top:771.72px;font-size:20.8px;line-height:20.8px;color:#6b7280;">3</span>
<span class="t" style="left:1012.22px;top:690.45px;font-size:20.8px;line-height:20.8px;color:#6b7280;">6</span>
<span class="t" style="left:1002.60px;top:591.19px;font-size:20.8px;line-height:20.8px;color:#6b7280;letter-spacing:-1.941px;">10</span>
<span class="t" style="left:1067.59px;top:881.39px;font-size:20.8px;line-height:20.8px;color:#6b7280;letter-spacing:0.733px;">23 Mar</span>
<span class="t" style="left:1177.50px;top:881.39px;font-size:20.8px;line-height:20.8px;color:#6b7280;letter-spacing:0.633px;">28 Mar</span>
<span class="t" style="left:1295.05px;top:881.39px;font-size:20.8px;line-height:20.8px;color:#6b7280;letter-spacing:0.884px;">2 Apr</span>
<span class="t" style="left:1404.96px;top:881.39px;font-size:20.8px;line-height:20.8px;color:#6b7280;letter-spacing:0.759px;">7 Apr</span>
<span class="t" style="left:1510.21px;top:881.39px;font-size:20.8px;line-height:20.8px;color:#6b7280;letter-spacing:0.052px;">12 Apr</span>
<span class="t" style="left:1618.30px;top:881.39px;font-size:20.8px;line-height:20.8px;color:#6b7280;letter-spacing:0.212px;">18 Apr</span>
<div class="a" style="left:1752.30px;top:496.00px;width:783.80px;height:462.60px;background:#fff;border-radius:21px;border:1.7px solid #e4e5ea;box-shadow:0 2px 5px rgba(0,0,0,0.07);"></div>
<span class="t" style="left:1795.30px;top:542.71px;font-size:24.2px;line-height:24.2px;color:#111113;font-weight:700;letter-spacing:-0.475px;">Activity (mins)</span>
<svg class="a" style="left:0;top:0" width="2592" height="1515" viewBox="0 0 2592 1515" fill="none"><line x1="1849.3" x2="2485.8" y1="862.9" y2="862.9" stroke="#f4f5f8" stroke-width="1.75"/><line x1="1849.3" x2="2485.8" y1="795.2" y2="795.2" stroke="#f4f5f8" stroke-width="1.75"/><line x1="1849.3" x2="2485.8" y1="727.5" y2="727.5" stroke="#f4f5f8" stroke-width="1.75"/><line x1="1849.3" x2="2485.8" y1="659.7" y2="659.7" stroke="#f4f5f8" stroke-width="1.75"/><line x1="1849.3" x2="2485.8" y1="592.0" y2="592.0" stroke="#f4f5f8" stroke-width="1.75"/><path d="M1849.3,761.3C1871.2,710.5 1893.2,659.7 1915.1,659.7C1922.5,659.7 1929.8,685.1 1937.1,693.6C1944.4,702.1 1951.7,705.2 1959.0,710.5C2010.3,747.9 2061.5,778.2 2112.7,778.2C2120.0,778.2 2127.3,766.0 2134.6,761.3C2149.3,751.9 2163.9,755.7 2178.5,744.4C2193.2,733.1 2207.8,608.9 2222.4,608.9C2229.7,608.9 2237.1,704.9 2244.4,710.5C2259.0,721.8 2273.6,727.5 2288.3,727.5C2295.6,727.5 2302.9,693.6 2310.2,693.6C2324.8,693.6 2339.5,704.9 2354.1,727.5C2361.4,738.7 2368.7,778.2 2376.1,778.2C2390.7,778.2 2405.3,710.5 2420.0,693.6C2427.3,685.1 2434.6,676.7 2441.9,676.7C2456.5,676.7 2471.2,710.5 2485.8,744.4" stroke="#2db85a" stroke-width="3.0" stroke-linecap="butt" stroke-linejoin="round"/></svg>
<span class="t" style="left:1825.22px;top:852.99px;font-size:20.8px;line-height:20.8px;color:#6b7280;">0</span>
<span class="t" style="left:1813.20px;top:785.27px;font-size:20.8px;line-height:20.8px;color:#6b7280;letter-spacing:0.459px;">20</span>
<span class="t" style="left:1812.40px;top:717.54px;font-size:20.8px;line-height:20.8px;color:#6b7280;letter-spacing:1.259px;">40</span>
<span class="t" style="left:1812.80px;top:649.82px;font-size:20.8px;line-height:20.8px;color:#6b7280;letter-spacing:0.859px;">60</span>
<span class="t" style="left:1812.80px;top:591.19px;font-size:20.8px;line-height:20.8px;color:#6b7280;letter-spacing:0.859px;">80</span>
<span class="t" style="left:1880.94px;top:881.39px;font-size:20.8px;line-height:20.8px;color:#6b7280;letter-spacing:0.733px;">23 Mar</span>
<span class="t" style="left:1990.94px;top:881.39px;font-size:20.8px;line-height:20.8px;color:#6b7280;letter-spacing:0.633px;">28 Mar</span>
<span class="t" style="left:2108.58px;top:881.39px;font-size:20.8px;line-height:20.8px;color:#6b7280;letter-spacing:0.884px;">2 Apr</span>
<span class="t" style="left:2218.57px;top:881.39px;font-size:20.8px;line-height:20.8px;color:#6b7280;letter-spacing:0.759px;">7 Apr</span>
<span class="t" style="left:2323.91px;top:881.39px;font-size:20.8px;line-height:20.8px;color:#6b7280;letter-spacing:0.052px;">12 Apr</span>
<span class="t" style="left:2432.10px;top:881.39px;font-size:20.8px;line-height:20.8px;color:#6b7280;letter-spacing:0.212px;">18 Apr</span>
<span class="t" style="left:938.90px;top:1004.91px;font-size:24.2px;line-height:24.2px;color:#111113;font-weight:700;letter-spacing:-0.246px;">Recent Logs</span>
<span class="t" style="left:2439.10px;top:1006.24px;font-size:22.4px;line-height:22.4px;color:#6b7280;letter-spacing:-0.116px;">20 entries</span>
<div class="a" style="left:939.20px;top:1054.90px;width:1596.40px;height:128.40px;background:#fff;border-radius:17px;border:1.6px solid #eef0f4;"></div>
<div class="a" style="left:960.00px;top:1076.80px;width:63.00px;height:63.00px;background:#e0f2fe;border-radius:32px;"></div>
<svg class="a" style="left:977.50px;top:1094.60px;" width="28.00" height="28.00" viewBox="0 0 24 24" fill="none" stroke="#0ea5e9" stroke-width="2" stroke-linecap="round" stroke-linejoin="round"><path d="M16.17 7.83 2 22"/><path d="M4.02 12a2.827 2.827 0 1 1 3.81-4.17A2.827 2.827 0 1 1 12 4.02a2.827 2.827 0 1 1 4.17 3.81A2.827 2.827 0 1 1 19.98 12a2.827 2.827 0 1 1-3.81 4.17A2.827 2.827 0 1 1 12 19.98a2.827 2.827 0 1 1-4.17-3.81A1 1 0 1 1 4 12"/><path d="m7.83 7.83 8.34 8.34"/></svg>
<span class="t" style="left:1043.80px;top:1081.15px;font-size:24.4px;line-height:24.4px;color:#111113;letter-spacing:0.612px;-webkit-text-stroke:0.5px #111113;">Good sleep, rested</span>
<div class="a" style="left:1044.20px;top:1130.00px;width:141.60px;height:31.00px;background:#f1f2f6;border-radius:8px;"></div>
<span class="t" style="left:1062.40px;top:1140.03px;font-size:14.5px;line-height:14.5px;color:#18181b;letter-spacing:0.804px;-webkit-text-stroke:0.5px #18181b;">Wellness: 9/10</span>
<span class="t" style="left:2344.00px;top:1091.88px;font-size:16.8px;line-height:16.8px;color:#6b7280;letter-spacing:0.317px;">18 Apr, 5:04 pm</span>
<div class="a" style="left:939.20px;top:1197.70px;width:1596.40px;height:120.20px;background:#fff;border-radius:17px;border:1.6px solid #eef0f4;"></div>
<div class="a" style="left:960.00px;top:1219.60px;width:63.00px;height:63.00px;background:#fef9c3;border-radius:32px;"></div>
<svg class="a" style="left:977.50px;top:1237.40px;" width="28.00" height="28.00" viewBox="0 0 24 24" fill="none" stroke="#eab308" stroke-width="2" stroke-linecap="round" stroke-linejoin="round"><path d="M3 2v7c0 1.1.9 2 2 2h4a2 2 0 0 0 2-2V2"/><path d="M7 2v20"/><path d="M21 15V2a5 5 0 0 0-5 5v6c0 1.1.9 2 2 2h3Zm0 0v7"/></svg>
<span class="t" style="left:1043.80px;top:1223.95px;font-size:24.4px;line-height:24.4px;color:#111113;letter-spacing:0.821px;-webkit-text-stroke:0.5px #111113;">Porridge with blueberries and honey</span>
<span class="t" style="left:1043.80px;top:1259.48px;font-size:22px;line-height:22px;color:#6b7280;letter-spacing:0.012px;">Good energy through the morning.</span>
<span class="t" style="left:2347.60px;top:1232.78px;font-size:16.8px;line-height:16.8px;color:#6b7280;letter-spacing:0.060px;">18 Apr, 1:30 pm</span>
<div class="a" style="left:939.20px;top:1333.80px;width:1596.40px;height:121.00px;background:#fff;border-radius:17px;border:1.6px solid #eef0f4;"></div>
<div class="a" style="left:960.00px;top:1355.70px;width:63.00px;height:63.00px;background:#fef9c3;border-radius:32px;"></div>
<svg class="a" style="left:977.50px;top:1373.50px;" width="28.00" height="28.00" viewBox="0 0 24 24" fill="none" stroke="#eab308" stroke-width="2" stroke-linecap="round" stroke-linejoin="round"><path d="M3 2v7c0 1.1.9 2 2 2h4a2 2 0 0 0 2-2V2"/><path d="M7 2v20"/><path d="M21 15V2a5 5 0 0 0-5 5v6c0 1.1.9 2 2 2h3Zm0 0v7"/></svg>
<span class="t" style="left:1043.80px;top:1359.25px;font-size:24.4px;line-height:24.4px;color:#111113;letter-spacing:0.658px;-webkit-text-stroke:0.5px #111113;">Grilled chicken salad</span>
<span class="t" style="left:1043.80px;top:1394.78px;font-size:22px;line-height:22px;color:#6b7280;letter-spacing:0.131px;">Light lunch, felt focused afterwards.</span>
<span class="t" style="left:2347.60px;top:1368.38px;font-size:16.8px;line-height:16.8px;color:#6b7280;letter-spacing:0.060px;">18 Apr, 1:30 pm</span>
<div class="a" style="left:939.20px;top:1469.10px;width:1596.40px;height:119.90px;background:#fff;border-radius:17px;border:1.6px solid #eef0f4;"></div>
<div class="a" style="left:960.00px;top:1491.00px;width:63.00px;height:63.00px;background:#dcfce7;border-radius:32px;"></div>
<svg class="a" style="left:977.50px;top:1508.80px;" width="28.00" height="28.00" viewBox="0 0 24 24" fill="none" stroke="#22c55e" stroke-width="2" stroke-linecap="round" stroke-linejoin="round"><path d="M17.596 12.768a2 2 0 1 0 2.829-2.829l-1.768-1.767a2 2 0 0 0 2.828-2.829l-2.828-2.828a2 2 0 0 0-2.829 2.828l-1.767-1.768a2 2 0 1 0-2.829 2.829z"/><path d="m2.5 21.5 1.4-1.4"/><path d="m20.1 3.9 1.4-1.4"/><path d="M5.343 21.485a2 2 0 1 0 2.829-2.828l1.767 1.768a2 2 0 1 0 2.829-2.829l-6.364-6.364a2 2 0 1 0-2.829 2.829l1.768 1.767a2 2 0 0 0-2.828 2.829z"/><path d="m9.6 14.4 4.8-4.8"/></svg>
<span class="t" style="left:1043.80px;top:1496.55px;font-size:24.4px;line-height:24.4px;color:#111113;letter-spacing:0.984px;-webkit-text-stroke:0.5px #111113;">Morning run</span>
<span class="t" style="left:2466.00px;top:1504.18px;font-size:16.8px;line-height:16.8px;color:#6b7280;"></span>
</div>
</div>
</body></html>
